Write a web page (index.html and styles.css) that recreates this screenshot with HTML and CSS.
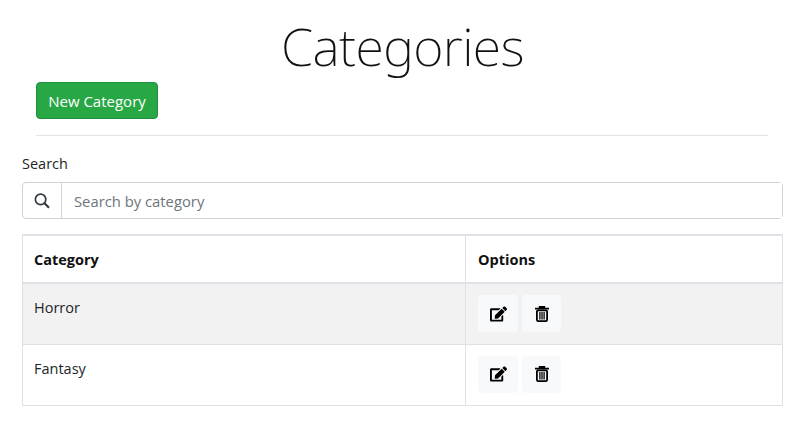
FILE: index.html
```html
<!DOCTYPE html>
<html lang="en">
<head>
    <meta charset="UTF-8">
    <meta name="viewport" content="width=device-width, initial-scale=1.0">
    <title>Categories</title>
    <link rel="stylesheet" href="styles.css">
</head>
<body>

<div class="container">
    <h1 class="title">Categories</h1>

    <div class="actions">
        <button class="btn-new">New Category</button>
        <hr class="divider">
    </div>

    <label class="search-label" for="search">Search</label>
    <div class="search-group">
        <span class="search-icon">
            <svg width="16" height="16" viewBox="0 0 16 16" fill="none" stroke="#343a40"><circle cx="6.600" cy="6.400" r="5.200" stroke-width="1.700"/><path d="M10.500 10.300L15 14.800" stroke-width="2.100"/></svg>
        </span>
        <input class="search-input" id="search" type="text" placeholder="Search by category">
    </div>

    <table class="category-table">
        <thead>
            <tr>
                <th class="col-name">Category</th>
                <th>Options</th>
            </tr>
        </thead>
        <tbody>
            <tr class="striped">
                <td class="name">Horror</td>
                <td>
                    <div class="options">
                        <button class="btn-icon">
                            <svg width="17" height="16" viewBox="0 0 576 512"><path d="M402.600 83.200l90.200 90.200c3.800 3.800 3.800 10 0 13.800L274.400 405.600l-92.800 10.300c-12.400 1.400-22.900-9.100-21.500-21.500l10.300-92.800L388.800 83.200c3.800-3.800 10-3.800 13.800 0zm162-22.900l-48.800-48.800c-15.200-15.200-39.900-15.200-55.200 0l-35.400 35.400c-3.800 3.800-3.800 10 0 13.800l90.200 90.200c3.800 3.800 10 3.800 13.800 0l35.400-35.400c15.200-15.300 15.200-40 0-55.200zM384 346.200V448H64V128h229.800c3.200 0 6.200-1.300 8.500-3.500l40-40c7.600-7.600 2.200-20.500-8.500-20.500H48C21.500 64 0 85.500 0 112v352c0 26.500 21.500 48 48 48h352c26.500 0 48-21.500 48-48V306.200c0-10.700-12.900-16-20.500-8.500l-40 40c-2.200 2.300-3.500 5.300-3.500 8.500z"/></svg>
                        </button>
                        <button class="btn-icon btn-trash">
                            <svg width="14" height="16" viewBox="0 0 14 16" fill="none" stroke="#000"><path d="M0 2.700h14M4.700 2.700V.9h4.600v1.800" stroke-width="1.800"/><rect x="1.900" y="4.300" width="10.200" height="10.800" rx="1.300" stroke-width="1.800"/><path d="M4.900 6v7.500M7 6v7.500M9.100 6v7.500" stroke-width="1.300"/></svg>
                        </button>
                    </div>
                </td>
            </tr>
            <tr>
                <td class="name">Fantasy</td>
                <td>
                    <div class="options">
                        <button class="btn-icon">
                            <svg width="17" height="16" viewBox="0 0 576 512"><path d="M402.600 83.200l90.200 90.200c3.800 3.800 3.800 10 0 13.800L274.400 405.600l-92.800 10.300c-12.400 1.400-22.900-9.100-21.500-21.500l10.300-92.800L388.800 83.200c3.800-3.800 10-3.800 13.800 0zm162-22.900l-48.800-48.800c-15.200-15.200-39.900-15.200-55.200 0l-35.400 35.400c-3.800 3.800-3.800 10 0 13.800l90.200 90.200c3.800 3.800 10 3.800 13.800 0l35.400-35.400c15.200-15.300 15.200-40 0-55.200zM384 346.200V448H64V128h229.800c3.200 0 6.200-1.300 8.500-3.500l40-40c7.600-7.600 2.200-20.500-8.500-20.500H48C21.500 64 0 85.500 0 112v352c0 26.500 21.500 48 48 48h352c26.500 0 48-21.500 48-48V306.200c0-10.700-12.900-16-20.500-8.500l-40 40c-2.200 2.300-3.500 5.300-3.500 8.500z"/></svg>
                        </button>
                        <button class="btn-icon btn-trash">
                            <svg width="14" height="16" viewBox="0 0 14 16" fill="none" stroke="#000"><path d="M0 2.700h14M4.700 2.700V.9h4.600v1.800" stroke-width="1.800"/><rect x="1.900" y="4.300" width="10.200" height="10.800" rx="1.300" stroke-width="1.800"/><path d="M4.900 6v7.500M7 6v7.500M9.100 6v7.500" stroke-width="1.300"/></svg>
                        </button>
                    </div>
                </td>
            </tr>
        </tbody>
    </table>
</div>

</body>
</html>
```

FILE: styles.css
```css
* {
    box-sizing: border-box;
}
body {
    font-family: "Open Sans", "Noto Sans", Arial, sans-serif;
    font-size: 15px;
    margin: 0;
    padding: 0;
    background-color: #fff;
    color: #212529;
}
.container {
    padding: 10px 17px 0 22px;
}
.title {
    font-family: "Noto Sans", "Open Sans", sans-serif;
    font-size: 52px;
    font-weight: 200;
    line-height: 72px;
    height: 72px;
    margin: 0;
    text-align: center;
    letter-spacing: -0.6px;
    color: #111;
}
.actions {
    padding: 0 15px 0 14px;
}
.btn-new {
    display: block;
    width: 122px;
    height: 37px;
    font-family: inherit;
    font-size: 15px;
    color: white;
    background-color: #28a745;
    border: 1px solid #218f3c;
    border-radius: 4px;
    padding: 0;
}
.divider {
    border: none;
    border-top: 1px solid #e4e4e4;
    margin: 16px 0 0;
}
.search-label {
    display: block;
    margin-top: 18px;
    line-height: 20px;
    font-size: 14.500px;
}
.search-group {
    display: flex;
    height: 37px;
    margin-top: 8px;
    border: 1px solid #ced4da;
    border-radius: 4px;
}
.search-icon {
    display: flex;
    align-items: center;
    justify-content: center;
    width: 39px;
    border-right: 1px solid #ced4da;
}
.search-input {
    flex: 1;
    border: none;
    outline: none;
    padding: 0 12px;
    font-family: inherit;
    font-size: 14.800px;
    color: #495057;
}
.search-input::placeholder {
    color: #6c757d;
    opacity: 1;
}
.category-table {
    width: 100%;
    margin-top: 15px;
    border-collapse: collapse;
    border: 1px solid #dee2e6;
    border-top-width: 2px;
    table-layout: fixed;
}
.category-table th,
.category-table td {
    padding: 12px;
    text-align: left;
    vertical-align: top;
    border-left: 1px solid #dee2e6;
}
.category-table th {
    height: 46px;
    padding-top: 12px;
    padding-bottom: 10px;
    font-size: 14.500px;
    line-height: 24px;
    font-weight: 700;
    color: #111;
    border-bottom: 2px solid #dee2e6;
}
.category-table td {
    height: 61px;
    font-size: 14.500px;
    line-height: 24px;
    border-bottom: 1px solid #dee2e6;
}
.category-table .col-name {
    width: 443px;
    padding-left: 11px;
}
.category-table .name {
    padding-left: 11px;
}
.striped {
    background-color: #f2f2f2;
}
.options {
    display: flex;
    gap: 4px;
    margin-top: -1px;
    margin-bottom: -1px;
}
.btn-icon {
    display: flex;
    align-items: center;
    justify-content: center;
    width: 40px;
    height: 37px;
    padding: 0;
    background-color: #f8f9fa;
    border: none;
    border-radius: 4px;
}
.btn-trash {
    width: 39px;
}
```
